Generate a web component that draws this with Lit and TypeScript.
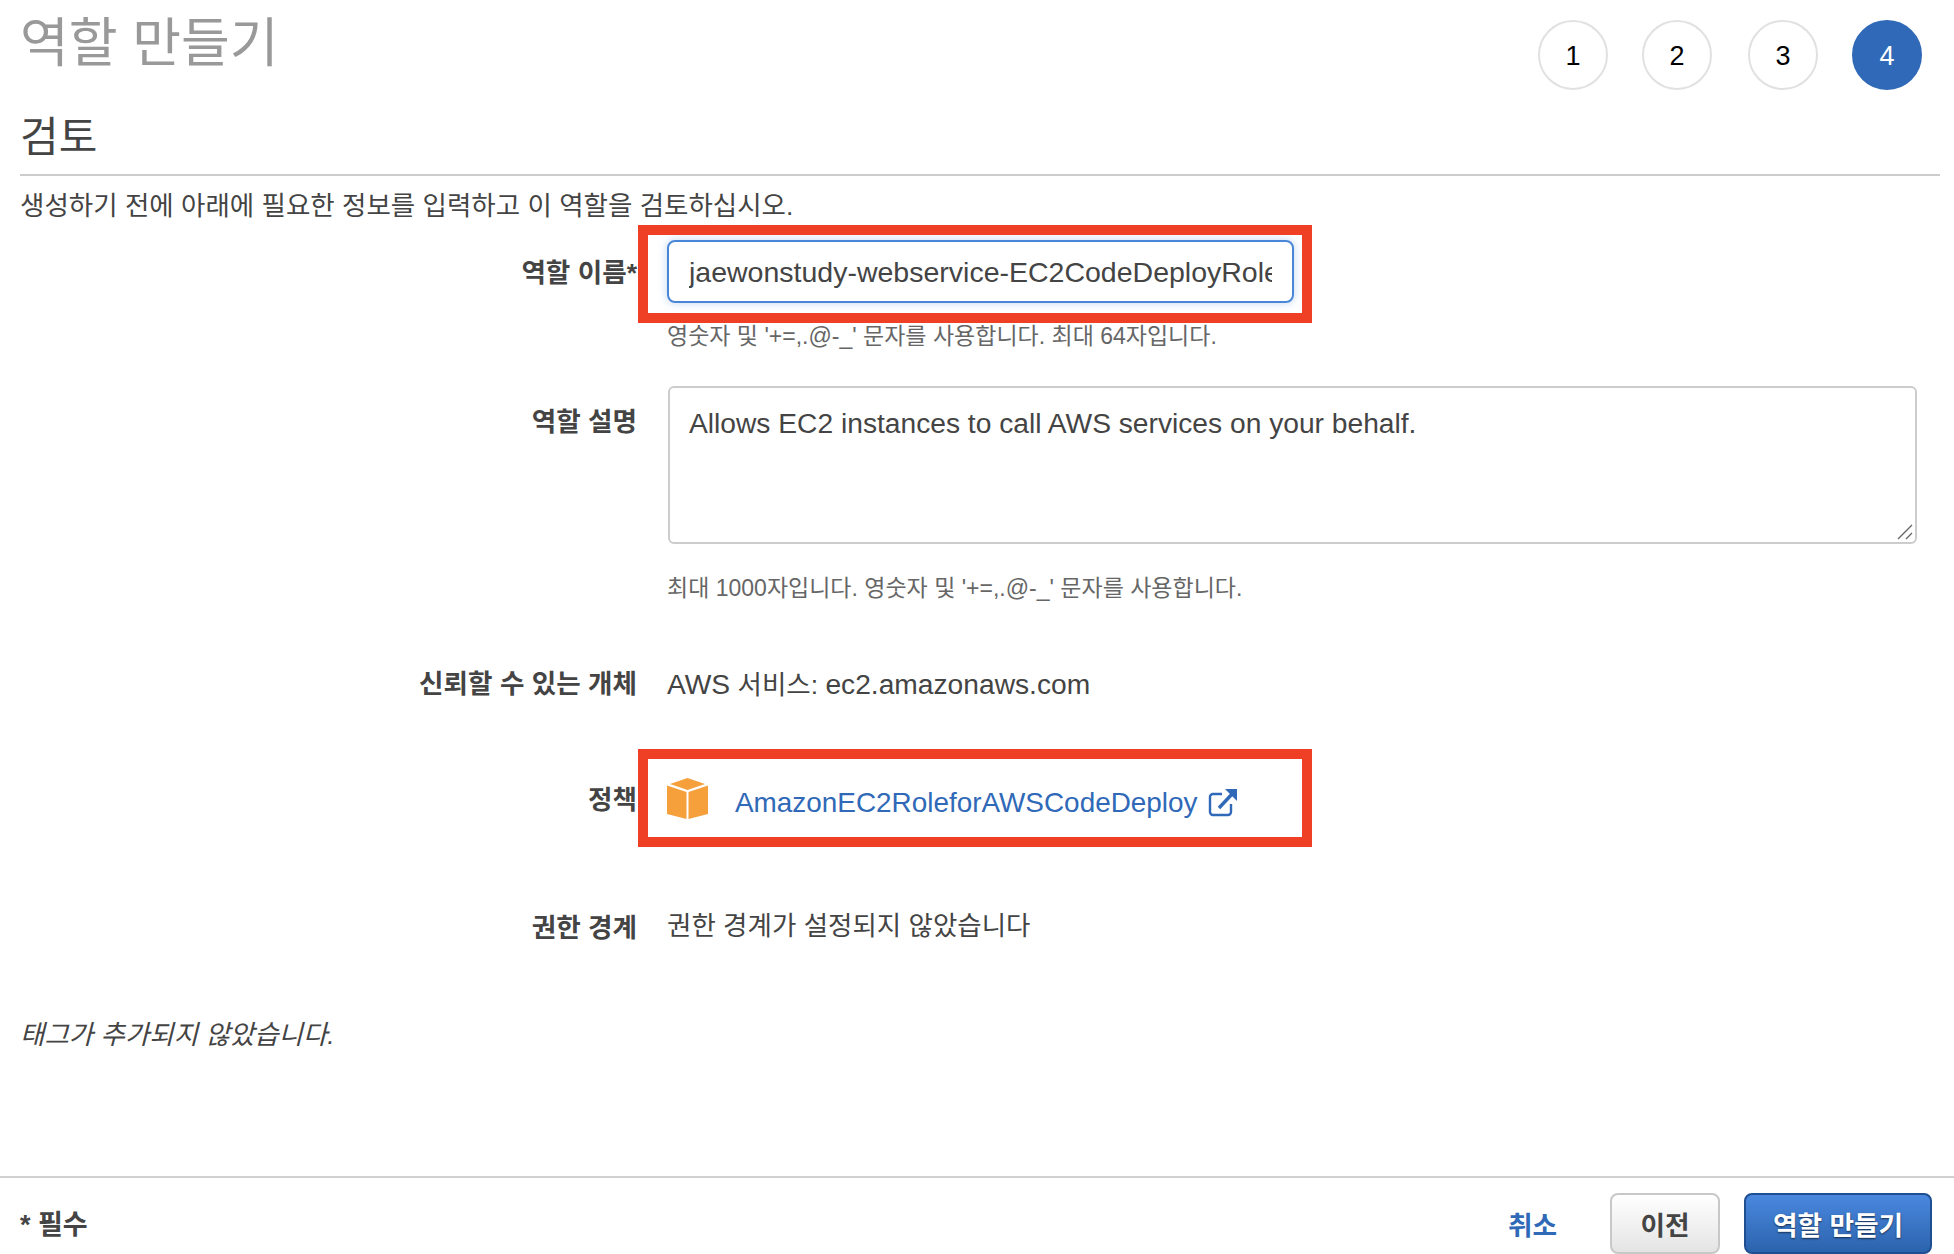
import { LitElement, html, css } from 'lit';
import { customElement } from 'lit/decorators.js';

@customElement('app-root')
export class AppRoot extends LitElement {
  static styles = css`
    :host {
      display: block;
      width: 1954px;
      height: 1254px;
      overflow: hidden;
      background: #fff;
      color: #444;
      font-family: "Liberation Sans", "Noto Sans CJK KR", sans-serif;
      font-size: 26.5px;
    }

    .main {
      height: 1178px;
      padding: 0 14px 0 20px;
      box-sizing: border-box;
      border-bottom: 2px solid #d0d0d0;
    }

    .top {
      display: flex;
      justify-content: space-between;
      height: 94px;
    }

    .title {
      margin: 0;
      font-size: 53px;
      font-weight: 400;
      line-height: 87px;
      color: #999;
    }

    .steps {
      display: flex;
      gap: 34px;
      padding: 20px 18px 0 0;
    }

    .step {
      width: 70px;
      height: 70px;
      box-sizing: border-box;
      border: 2px solid #e1e1e1;
      border-radius: 50%;
      padding-top: 2px;
      display: flex;
      align-items: center;
      justify-content: center;
      color: #000;
      font-size: 27px;
    }

    .step:nth-child(3) {
      margin-left: 2px;
    }

    .step.on {
      background: #2f69b7;
      border-color: #2f69b7;
      color: #fff;
    }

    .sub {
      margin: 0;
      height: 80px;
      font-size: 42px;
      font-weight: 400;
      line-height: 88px;
      border-bottom: 2px solid #ccc;
    }

    .intro {
      margin: 14px 0 0;
      line-height: 32px;
    }

    .row {
      display: grid;
      grid-template-columns: 617px 1fr;
      column-gap: 30px;
    }

    .label {
      text-align: right;
      font-weight: 700;
      font-size: 26.6px;
      line-height: 32px;
    }

    .value {
      position: relative;
      line-height: 32px;
    }

    .latin {
      font-size: 28.2px;
    }

    .mark {
      position: absolute;
      box-sizing: border-box;
      width: 674px;
      height: 98px;
      left: -29px;
      border: 10px solid #ef3f24;
    }

    .input {
      width: 627px;
      height: 63px;
      box-sizing: border-box;
      border: 2px solid #4a86d8;
      border-radius: 8px;
      box-shadow: 0 0 8px rgba(74, 134, 216, 0.35);
      padding: 0 20px;
      display: flex;
      align-items: center;
      font-size: 28.5px;
    }

    .input span {
      overflow: hidden;
      white-space: nowrap;
    }

    .help {
      margin: 17px 0 0;
      font-size: 23px;
      line-height: 32px;
      color: #666;
    }

    .area {
      position: relative;
      width: 1249px;
      height: 158px;
      margin-left: 1px;
      box-sizing: border-box;
      border: 2px solid #ccc;
      border-radius: 6px;
      padding: 19px;
      font-size: 28.2px;
    }

    .grip {
      position: absolute;
      right: 1px;
      bottom: 1px;
    }

    .policy {
      display: flex;
      align-items: center;
      gap: 27px;
      height: 44px;
    }

    .box {
      margin-bottom: 10px;
    }

    .link {
      display: inline-flex;
      align-items: center;
      gap: 11px;
      color: #2f69b7;
      font-size: 27.9px;
    }

    .tags {
      margin: 75px 0 0;
      font-style: italic;
      line-height: 32px;
    }

    .foot {
      display: flex;
      align-items: center;
      justify-content: space-between;
      height: 76px;
      padding: 14px 22px 0 20px;
      box-sizing: border-box;
      font-size: 26.7px;
    }

    .req {
      font-weight: 700;
      font-size: 27px;
      margin-top: -2px;
    }

    .actions {
      display: flex;
      align-items: center;
    }

    .cancel {
      color: #2f69b7;
      font-weight: 700;
      margin-right: 53px;
    }

    .btn {
      height: 61px;
      box-sizing: border-box;
      border-radius: 8px;
      display: flex;
      align-items: center;
      justify-content: center;
      font-weight: 700;
    }

    .prev {
      width: 110px;
      margin-right: 24px;
      border: 2px solid #c8c8c8;
      background: linear-gradient(#fff, #e4e4e4);
    }

    .create {
      width: 188px;
      border: 2px solid #1f4f91;
      background: linear-gradient(#4a88df, #2b63ad);
      color: #fff;
      text-shadow: 0 1px 2px rgba(0, 0, 0, 0.6);
    }
  `;

  render() {
    return html`
      <div class="main">
        <div class="top">
          <h1 class="title">역할 만들기</h1>
          <div class="steps">
            <div class="step">1</div>
            <div class="step">2</div>
            <div class="step">3</div>
            <div class="step on">4</div>
          </div>
        </div>
        <h2 class="sub">검토</h2>
        <p class="intro">생성하기 전에 아래에 필요한 정보를 입력하고 이 역할을 검토하십시오.</p>

        <div class="row" style="margin-top:18px">
          <div class="label" style="padding-top:17px">역할 이름*</div>
          <div class="value">
            <div class="mark" style="top:-15px"></div>
            <div class="input"><span>jaewonstudy-webservice-EC2CodeDeployRole</span></div>
            <p class="help">영숫자 및 '+=,.@-_' 문자를 사용합니다. 최대 64자입니다.</p>
          </div>
        </div>

        <div class="row" style="margin-top:34px">
          <div class="label" style="padding-top:20px">역할 설명</div>
          <div class="value">
            <div class="area">
              Allows EC2 instances to call AWS services on your behalf.
              <svg class="grip" width="18" height="18" viewBox="0 0 18 18" fill="none" stroke="#666" stroke-width="1.4">
                <path d="M2 16 16 2M10 16l6-6" />
              </svg>
            </div>
            <p class="help" style="margin-top:28px">최대 1000자입니다. 영숫자 및 '+=,.@-_' 문자를 사용합니다.</p>
          </div>
        </div>

        <div class="row" style="margin-top:64px">
          <div class="label">신뢰할 수 있는 개체</div>
          <div class="value"><span class="latin">AWS</span> 서비스: <span class="latin">ec2.amazonaws.com</span></div>
        </div>

        <div class="row" style="margin-top:80px">
          <div class="label" style="padding-top:3px">정책</div>
          <div class="value">
            <div class="mark" style="top:-32px"></div>
            <div class="policy">
              ${this.boxIcon()}
              <a class="link">AmazonEC2RoleforAWSCodeDeploy ${this.extIcon()}</a>
            </div>
          </div>
        </div>

        <div class="row" style="margin-top:85px">
          <div class="label" style="padding-top:2px">권한 경계</div>
          <div class="value">권한 경계가 설정되지 않았습니다</div>
        </div>

        <p class="tags">태그가 추가되지 않았습니다.</p>
      </div>

      <div class="foot">
        <div class="req">* 필수</div>
        <div class="actions">
          <a class="cancel">취소</a>
          <div class="btn prev">이전</div>
          <div class="btn create">역할 만들기</div>
        </div>
      </div>
    `;
  }

  boxIcon() {
    return html`<svg class="box" width="41" height="41" viewBox="0 0 41 41">
      <path fill="#f6a03c" d="M20.5 0 38 6 20.5 12 3 6zM0 7.500 19.500 14v27L0 36zM41 7.500 21.500 14v27L41 36z" />
    </svg>`;
  }

  extIcon() {
    return html`<svg width="30" height="30" viewBox="0 0 30 30" fill="none" stroke="#2f69b7" stroke-width="2.4">
      <path d="M14 6H5a3 3 0 0 0-3 3v15a3 3 0 0 0 3 3h15a3 3 0 0 0 3-3v-8" />
      <path d="M11 20 25 5" stroke-width="3.4" />
      <path d="M17 1h12v12z" fill="#2f69b7" stroke="none" />
    </svg>`;
  }
}
